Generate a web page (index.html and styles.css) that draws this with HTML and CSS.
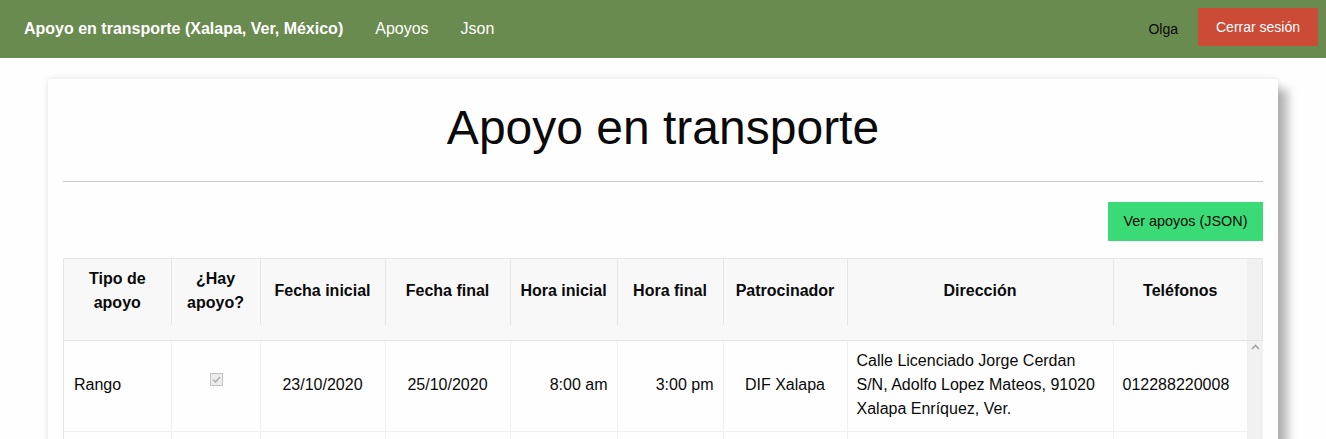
FILE: index.html
```html
<!DOCTYPE html>
<html lang="es">
<head>
<meta charset="utf-8">
<title>Apoyo en transporte</title>
<link rel="stylesheet" href="styles.css">
</head>
<body>
<nav class="topbar">
  <div class="menu">
    <span class="brand">Apoyo en transporte (Xalapa, Ver, México)</span>
    <a class="nav-link" href="#">Apoyos</a>
    <a class="nav-link" href="#">Json</a>
  </div>
  <div class="menu-right">
    <span class="user">Olga</span>
    <button class="logout" type="button">Cerrar sesión</button>
  </div>
</nav>
<main class="page">
  <section class="card">
    <h1 class="title">Apoyo en transporte</h1>
    <hr class="divider">
    <div class="actions">
      <button class="btn-json" type="button">Ver apoyos (JSON)</button>
    </div>
    <div class="grid">
      <div class="grid-head">
        <div class="head-main">
          <table class="tbl tbl-head">
            <colgroup>
              <col class="c1"><col class="c2"><col class="c3"><col class="c4"><col class="c5"><col class="c6"><col class="c7"><col class="c8"><col class="c9">
            </colgroup>
            <thead>
              <tr>
                <th>Tipo de apoyo</th>
                <th>¿Hay apoyo?</th>
                <th>Fecha inicial</th>
                <th>Fecha final</th>
                <th>Hora inicial</th>
                <th>Hora final</th>
                <th>Patrocinador</th>
                <th>Dirección</th>
                <th>Teléfonos</th>
              </tr>
            </thead>
          </table>
        </div>
        <div class="head-gutter"></div>
      </div>
      <div class="grid-body">
        <table class="tbl tbl-body">
          <colgroup>
            <col class="c1"><col class="c2"><col class="c3"><col class="c4"><col class="c5"><col class="c6"><col class="c7"><col class="c8"><col class="c9">
          </colgroup>
          <tbody>
            <tr>
              <td class="left">Rango</td>
              <td class="center"><span class="check" role="checkbox" aria-checked="true" aria-disabled="true"><svg width="13" height="13" viewBox="0 0 13 13"><rect x="0.5" y="0.5" width="12" height="12" fill="#ebebeb" stroke="#c2c2c2"/><path d="M3 6.6 L5.4 9 L10 4" fill="none" stroke="#a8a8a8" stroke-width="1.3"/></svg></span></td>
              <td class="center">23/10/2020</td>
              <td class="center">25/10/2020</td>
              <td class="right">8:00 am</td>
              <td class="right">3:00 pm</td>
              <td class="center">DIF Xalapa</td>
              <td class="left">Calle Licenciado Jorge Cerdan S/N, Adolfo Lopez Mateos, 91020 Xalapa Enríquez, Ver.</td>
              <td class="left">012288220008</td>
            </tr>
            <tr class="next-row">
              <td></td><td></td><td></td><td></td><td></td><td></td><td></td><td></td><td></td>
            </tr>
          </tbody>
        </table>
        <div class="scrollbar">
          <svg class="arrow" width="9" height="6" viewBox="0 0 9 6"><path d="M1 5 L4.5 1.5 L8 5" fill="none" stroke="#a3a3a3" stroke-width="1.6"/></svg>
        </div>
      </div>
    </div>
  </section>
</main>
</body>
</html>
```
FILE: styles.css
```css
* { box-sizing: border-box; }

body {
  margin: 0;
  background: #fefefe;
  color: #0a0a0a;
  font-family: "Liberation Sans", Arial, sans-serif;
  font-size: 16px;
  line-height: 1.5;
}

.topbar {
  display: flex;
  justify-content: space-between;
  align-items: center;
  height: 58px;
  padding: 0 8px;
  background: #6a8b4f;
}

.menu {
  display: flex;
  align-items: center;
}

.brand {
  padding: 0 16px;
  font-weight: bold;
  color: #fefefe;
}

.nav-link {
  padding: 0 16px;
  color: #fefefe;
  text-decoration: none;
}

.menu-right {
  display: flex;
  align-items: center;
}

.user {
  font-size: 14px;
  color: #0a0a0a;
  margin-right: 20px;
  padding-top: 1px;
}

.logout {
  width: 120px;
  height: 38px;
  margin-top: -4px;
  border: 0;
  border-radius: 0;
  background: #cc4b37;
  color: #fefefe;
  font-family: inherit;
  font-size: 14px;
  line-height: 1;
  padding: 0;
}

.page {
  padding: 21px 48px 0;
}

.card {
  background: #fefefe;
  padding: 15px;
  border-radius: 3px;
  box-shadow: 10px 10px 10px rgba(0, 0, 0, 0.28), 0 0 6px rgba(0, 0, 0, 0.12);
}

.title {
  margin: 0;
  font-size: 48px;
  font-weight: normal;
  line-height: 1.4;
  text-align: center;
}

.divider {
  margin: 20px 0;
  border: 0;
  border-bottom: 1px solid #cacaca;
  height: 0;
}

.actions {
  display: flex;
  justify-content: flex-end;
  margin-bottom: 17px;
}

.btn-json {
  width: 155px;
  height: 39px;
  padding: 0;
  border: 0;
  border-radius: 0;
  background: #3adb76;
  color: #0a0a0a;
  font-family: inherit;
  font-size: 14.4px;
  line-height: 1;
}

.grid {
  width: 1200px;
}

.grid-head {
  display: flex;
  background: #f8f8f8;
  border: 1px solid #e6e6e6;
  border-bottom-color: #e2e2e2;
}

.head-main {
  width: 1183px;
  padding-bottom: 15px;
}

.head-gutter {
  width: 15px;
  background: #f0f0f0;
}

.grid-body {
  display: flex;
  border-left: 1px solid #e6e6e6;
}

.tbl {
  width: 1183px;
  table-layout: fixed;
  border-collapse: collapse;
}

.c1 { width: 107px; }
.c2 { width: 89px; }
.c3 { width: 125px; }
.c4 { width: 125px; }
.c5 { width: 107px; }
.c6 { width: 106px; }
.c7 { width: 124px; }
.c8 { width: 266px; }
.c9 { width: 134px; }

.tbl-head th {
  padding: 8px 6px 10px;
  font-weight: bold;
  text-align: center;
  vertical-align: middle;
  line-height: 24px;
  white-space: normal;
  border-left: 1px solid #e6e6e6;
}

.tbl-head th:first-child {
  border-left: 0;
}

.tbl-body td {
  padding: 8px 9px 10px;
  line-height: 24px;
  vertical-align: middle;
  border: 1px solid #f0f0f0;
  border-top: 0;
}

.tbl-body td:first-child {
  border-left: 0;
  padding-left: 10px;
}

.tbl-body .next-row td {
  height: 60px;
}

.left { text-align: left; }
.center { text-align: center; }
.right { text-align: right; }

.check {
  display: inline-block;
  width: 13px;
  height: 13px;
  vertical-align: 5px;
  margin-left: 2px;
}

.check svg {
  display: block;
}

.scrollbar {
  width: 16px;
  background: #f1f1f1;
  display: flex;
  justify-content: center;
  align-items: flex-start;
  padding-top: 3px;
}

.arrow {
  display: block;
}
```
